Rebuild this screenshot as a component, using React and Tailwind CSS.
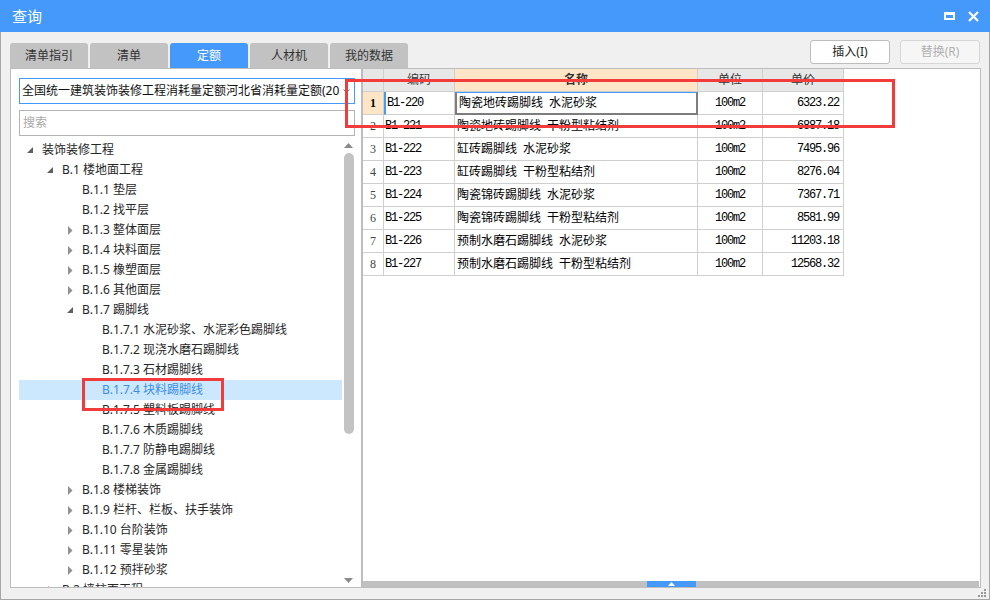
import React from "react";

const ui = { fontFamily: '"Noto Sans", "Noto Sans CJK SC", sans-serif' };
const grid = { fontFamily: '"Liberation Mono", "Noto Sans CJK SC", monospace' };

const tabs = ["清单指引", "清单", "定额", "人材机", "我的数据"];

// level, text, state: open | closed | leaf
const tree = [
  [0, "装饰装修工程", "open"],
  [1, "B.1 楼地面工程", "open"],
  [2, "B.1.1 垫层", "leaf"],
  [2, "B.1.2 找平层", "leaf"],
  [2, "B.1.3 整体面层", "closed"],
  [2, "B.1.4 块料面层", "closed"],
  [2, "B.1.5 橡塑面层", "closed"],
  [2, "B.1.6 其他面层", "closed"],
  [2, "B.1.7 踢脚线", "open"],
  [3, "B.1.7.1 水泥砂浆、水泥彩色踢脚线", "leaf"],
  [3, "B.1.7.2 现浇水磨石踢脚线", "leaf"],
  [3, "B.1.7.3 石材踢脚线", "leaf"],
  [3, "B.1.7.4 块料踢脚线", "leaf", true],
  [3, "B.1.7.5 塑料板踢脚线", "leaf"],
  [3, "B.1.7.6 木质踢脚线", "leaf"],
  [3, "B.1.7.7 防静电踢脚线", "leaf"],
  [3, "B.1.7.8 金属踢脚线", "leaf"],
  [2, "B.1.8 楼梯装饰", "closed"],
  [2, "B.1.9 栏杆、栏板、扶手装饰", "closed"],
  [2, "B.1.10 台阶装饰", "closed"],
  [2, "B.1.11 零星装饰", "closed"],
  [2, "B.1.12 预拌砂浆", "closed"],
  [1, "B.2 墙柱面工程", "closed"],
];

const pads = ["pl-[8px]", "pl-[28px]", "pl-[48px]", "pl-[68px]"];

const rows = [
  ["B1-220", "陶瓷地砖踢脚线\u2002水泥砂浆", "6323.22"],
  ["B1-221", "陶瓷地砖踢脚线\u2002干粉型粘结剂", "6887.18"],
  ["B1-222", "缸砖踢脚线\u2002水泥砂浆", "7495.96"],
  ["B1-223", "缸砖踢脚线\u2002干粉型粘结剂", "8276.04"],
  ["B1-224", "陶瓷锦砖踢脚线\u2002水泥砂浆", "7367.71"],
  ["B1-225", "陶瓷锦砖踢脚线\u2002干粉型粘结剂", "8581.99"],
  ["B1-226", "预制水磨石踢脚线\u2002水泥砂浆", "11203.18"],
  ["B1-227", "预制水磨石踢脚线\u2002干粉型粘结剂", "12568.32"],
];

const Arrow = ({ state }) => {
  if (state === "open")
    return (
      <svg width="7" height="7" viewBox="0 0 7 7" className="mt-[1px]">
        <polygon points="6,0 6,6 0,6" fill="#5f5f5f" />
      </svg>
    );
  if (state === "closed")
    return (
      <svg width="5" height="9" viewBox="0 0 5 9" className="ml-[1px]">
        <polygon points="0,0 4.5,4.5 0,9" fill="#909090" />
      </svg>
    );
  return null;
};

const TreeRow = ({ level, text, state, selected }) => (
  <div
    className={`h-[20px] flex items-center shrink-0 ${pads[level]} ${
      selected ? "bg-[#cce8ff] text-[#3b8de6]" : "text-[#262626]"
    }`}
  >
    <div className="w-[15px] flex items-center">
      <Arrow state={state} />
    </div>
    <span className="text-[12px] leading-[20px] whitespace-nowrap">{text}</span>
  </div>
);

const App = () => {
  return (
    <div className="relative w-[990px] h-[600px] bg-[#f0f0f0] overflow-hidden" style={ui}>
      {/* title bar */}
      <div className="h-[32px] bg-[#4599fb] flex items-center justify-between pl-[12px] pr-[11px]">
        <span className="text-white text-[15px] leading-none">查询</span>
        <div className="flex items-center gap-[13px]">
          <div className="w-[11px] h-[8px] border-[2px] border-t-[3px] border-white" />
          <svg width="11" height="11" viewBox="0 0 11 11">
            <path d="M1 1 L10 10 M10 1 L1 10" stroke="#fff" strokeWidth="2.2" />
          </svg>
        </div>
      </div>

      {/* body */}
      <div className="h-[568px] flex flex-col border-x border-b border-[#a6a6a6] pl-[9px] pr-[8px]">
        <div className="h-[36px] flex justify-between shrink-0">
          <div className="flex items-end gap-[2px]">
            {tabs.map((t) => (
              <div
                key={t}
                className={`w-[78px] h-[25px] rounded-t-[3px] flex items-center justify-center text-[12px] ${
                  t === "定额" ? "bg-[#4599fb] text-white" : "bg-[#c2c2c2] text-[#333]"
                }`}
              >
                {t}
              </div>
            ))}
          </div>
          <div className="flex gap-[10px] pt-[8px] pr-[1px]">
            <button className="w-[80px] h-[24px] rounded-[3px] border border-[#bdbdbd] bg-white text-[12px] text-[#222]">
              插入(I)
            </button>
            <button className="w-[80px] h-[24px] rounded-[3px] border border-[#d6d6d6] bg-[#f6f6f6] text-[12px] text-[#b0b0b0]">
              替换(R)
            </button>
          </div>
        </div>

        <div className="h-[520px] flex shrink-0">
          {/* left panel */}
          <div className="w-[352px] h-full bg-white border border-[#bdbdbd] flex flex-col pl-[8px] pr-[6px]">
            <div className="mt-[9px] h-[26px] border border-[#4599fb] flex items-center pl-[2px] pr-[4px] shrink-0">
              <span className="flex-1 text-[12px] text-[#111] whitespace-nowrap overflow-hidden">
                全国统一建筑装饰装修工程消耗量定额河北省消耗量定额(2012)
              </span>
              <svg width="7" height="4" viewBox="0 0 7 4" className="ml-[3px]">
                <polyline points="0.5,0.5 3.5,3.5 6.5,0.5" fill="none" stroke="#777" />
              </svg>
            </div>
            <div className="mt-[6px] h-[26px] border border-[#b4b4b4] flex items-center pl-[3px] shrink-0">
              <span className="text-[12px] text-[#a8a8a8]">搜索</span>
            </div>
            <div className="mt-[4px] flex flex-1 overflow-hidden">
              <div className="flex-1 flex flex-col overflow-hidden">
                {tree.map(([level, text, state, selected]) => (
                  <TreeRow key={text} level={level} text={text} state={state} selected={selected} />
                ))}
              </div>
              {/* tree scrollbar */}
              <div className="w-[13px] flex flex-col items-center pt-[3px]">
                <svg width="9" height="5" viewBox="0 0 9 5">
                  <polygon points="0,5 4.5,0 9,5" fill="#8a8a8a" />
                </svg>
                <div className="mt-[5px] w-[10px] h-[281px] rounded-full bg-[#c3c3c3]" />
                <div className="flex-1" />
                <svg width="9" height="5" viewBox="0 0 9 5" className="mb-[4px]">
                  <polygon points="0,0 4.5,5 9,0" fill="#8a8a8a" />
                </svg>
              </div>
            </div>
          </div>

          {/* right panel */}
          <div className="flex-1 h-full bg-white border border-[#bdbdbd] flex flex-col text-[12px]">
            <div className="flex h-[23px] bg-[#e7e7e7] w-[481px] text-[#333]">
              <div className="w-[21px] border-r border-b border-[#cfcfcf]" />
              <div className="w-[71px] border-r border-b border-[#cfcfcf] flex items-center justify-center">编码</div>
              <div className="w-[243px] border-r border-b border-[#cfcfcf] bg-[#fde5c6] flex items-center justify-center font-bold">
                名称
              </div>
              <div className="w-[65px] border-r border-b border-[#cfcfcf] flex items-center justify-center">单位</div>
              <div className="w-[81px] border-r border-b border-[#cfcfcf] flex items-center justify-center">单价</div>
            </div>
            {rows.map(([code, name, price], i) => (
              <div key={code} className="flex h-[23px] w-[481px] text-black">
                <div
                  className={`w-[21px] border-r border-b border-[#cfcfcf] flex items-center justify-center ${
                    i === 0 ? "bg-[#fde5c6] font-bold" : "text-[#444]"
                  }`}
                  style={{ fontFamily: '"Liberation Serif", serif' }}
                >
                  {i + 1}
                </div>
                <div
                  className={`w-[71px] border-r border-b border-[#cfcfcf] flex items-center pl-[1px] text-[12px] tracking-[-1.2px] ${
                    i === 0 ? "border-l-2 border-l-[#4599fb]" : ""
                  }`}
                  style={grid}
                >
                  {code}
                </div>
                <div
                  className={`w-[243px] flex items-center pl-[2px] whitespace-nowrap ${
                    i === 0
                      ? "border-2 border-[#7d7d7d] border-t border-t-[#4599fb]"
                      : "border-r border-b border-[#cfcfcf]"
                  }`}
                >
                  {name}
                </div>
                <div
                  className="w-[65px] border-r border-b border-[#cfcfcf] flex items-center justify-center text-[12px] tracking-[-1.2px]"
                  style={grid}
                >
                  100m2
                </div>
                <div
                  className="w-[81px] border-r border-b border-[#cfcfcf] flex items-center justify-end pr-[4px] text-[12px] tracking-[-1.2px]"
                  style={grid}
                >
                  {price}
                </div>
              </div>
            ))}
            <div className="flex-1" />
            {/* horizontal scrollbar */}
            <div className="h-[6px] bg-[#c0c0c0] flex justify-center mr-[1px]">
              <div className="w-[49px] h-full bg-[#4599fb] flex items-center justify-center">
                <svg width="7" height="4" viewBox="0 0 7 4">
                  <polygon points="0,4 3.5,0 7,4" fill="#fff" />
                </svg>
              </div>
            </div>
          </div>
        </div>
      </div>

      {/* resize grip */}
      <div className="absolute right-[4px] bottom-[3px] grid grid-cols-3 gap-[1px] w-[8px]">
        <span />
        <span />
        <span className="w-[2px] h-[2px] bg-[#999]" />
        <span />
        <span className="w-[2px] h-[2px] bg-[#999]" />
        <span className="w-[2px] h-[2px] bg-[#999]" />
        <span className="w-[2px] h-[2px] bg-[#999]" />
        <span className="w-[2px] h-[2px] bg-[#999]" />
        <span className="w-[2px] h-[2px] bg-[#999]" />
      </div>

      {/* red annotation boxes */}
      <div className="absolute left-[82px] top-[378px] w-[142px] h-[33px] border-[3px] border-[#f23b3b]" />
      <div className="absolute left-[345px] top-[79px] w-[550px] h-[49px] border-[3px] border-[#f23b3b]" />
    </div>
  );
};

export default App;
